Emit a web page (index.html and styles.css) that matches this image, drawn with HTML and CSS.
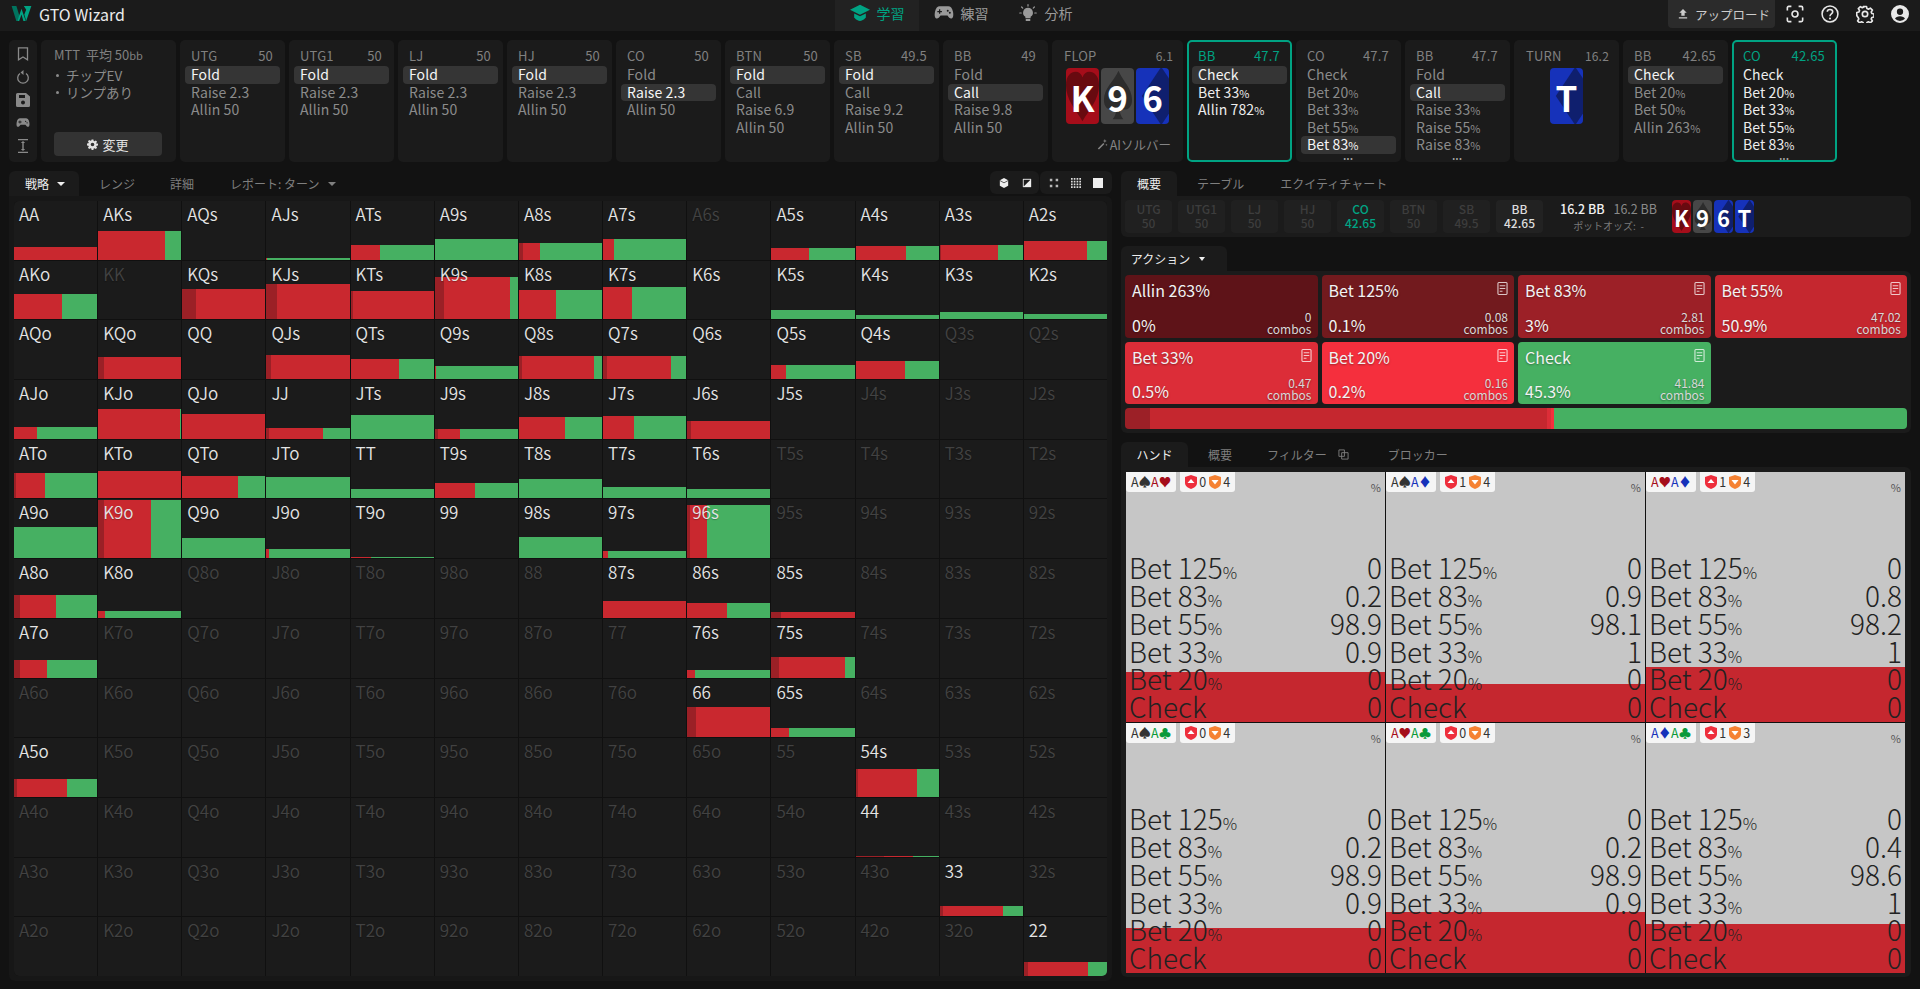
FILE: index.html
```html
<!DOCTYPE html>
<html lang="ja">
<head>
<meta charset="utf-8">
<title>GTO Wizard</title>
<link rel="stylesheet" href="styles.css">
</head>
<body>
<svg class="sprite" aria-hidden="true">
<symbol id="s-heart" viewBox="0 0 34 56"><path d="M17 54C10 42 0 32 0 17 0 7 5 3 10 3c3 0 6 2 7 6 1-4 4-6 7-6 5 0 10 4 10 14 0 15-10 25-17 37z"/></symbol>
<symbol id="s-spade" viewBox="0 0 34 56"><path d="M18 2c4 10 14 18 14 30 0 7-4 10-8 10-2 0-4-1-5-3 0 5 1 9 4 13H12c3-4 4-8 4-13-1 2-3 3-5 3-4 0-8-3-8-10C3 20 14 12 18 2z"/></symbol>
<symbol id="s-diamond" viewBox="0 0 34 56"><path d="M26-2l20 30-20 30L6 28z"/></symbol>
<symbol id="s-gamepad" viewBox="0 0 24 18"><path fill-rule="evenodd" d="M7 1h10c3 0 4.700 2 5.800 6.500.8 4 .4 7.500-1.800 8-1.700.4-3.200-1.200-4.800-3.500H7.800C6.200 14.300 4.700 15.900 3 15.500.8 15 .4 11.500 1.200 7.500 2.300 3 4 1 7 1zM6 4.500v2H4v1.500h2v2h1.500V8h2V6.500h-2v-2zM16.500 5a1.200 1.200 0 100 2.400 1.200 1.200 0 000-2.400zM19 7.500a1.200 1.200 0 100 2.400 1.200 1.200 0 000-2.400z"/></symbol>
<symbol id="s-gear" viewBox="0 0 24 24"><path fill-rule="evenodd" d="M10 1h4l.6 3.200 1.900.8 2.700-1.900 2.800 2.800-1.900 2.700.8 1.900L24 10v4l-3.100.6-.8 1.900 1.900 2.700-2.800 2.800-2.700-1.900-1.900.8L14 24h-4l-.6-3.100-1.900-.8-2.700 1.900-2.800-2.800 1.900-2.700-.8-1.900L0 14v-4l3.100-.6.800-1.900L2 4.800 4.800 2l2.700 1.900 1.900-.8zM12 8a4 4 0 100 8 4 4 0 000-8z"/></symbol>
<symbol id="s-note" viewBox="0 0 11 14"><path fill="none" stroke="currentColor" stroke-width="1.200" d="M1.500.6h8a.9.9 0 01.9.9v11a.9.9 0 01-.9.9h-8a.9.9 0 01-.9-.9v-11a.9.9 0 01.9-.9zM2.500 4h6M2.500 7h6M2.500 10h3"/></symbol>
<symbol id="s-shield-up" viewBox="0 0 12 14"><path d="M6 0l6 2v6c0 3-3 5-6 6-3-1-6-3-6-6V2z"/><path fill="#fff" d="M6 4l3.500 4h-7z"/></symbol>
<symbol id="s-shield-down" viewBox="0 0 12 14"><path d="M6 0l6 2v6c0 3-3 5-6 6-3-1-6-3-6-6V2z"/><path fill="#fff" d="M2.500 5h7L6 9.500z"/></symbol>
</svg>

<header class="topbar">
  <div class="brand">
    <svg class="logo" viewBox="0 0 21 16"><path fill="#00745f" d="M0 0h5l3.500 11L6 16H5z"/><path fill="#00a383" d="M6 16L10.500 3l4.500 13h-2.500L10.500 9 8 16zM13 0h8l-5.500 16L13.500 9l2-5z"/></svg>
    <span>GTO Wizard</span>
  </div>
  <nav class="mainnav">
    <a class="navtab active"><svg viewBox="0 0 24 20"><path fill="currentColor" d="M12 0l12 6-12 6L0 6zM5 10.500v5s3 4 7 4 7-4 7-4v-5l-7 3.500z"/></svg>学習</a>
    <a class="navtab"><svg viewBox="0 0 24 18"><use href="#s-gamepad" fill="currentColor"/></svg>練習</a>
    <a class="navtab"><svg viewBox="0 0 24 24"><path fill="currentColor" d="M12 5a6.500 6.500 0 00-3.500 12v2h7v-2A6.500 6.500 0 0012 5zM9 20h6v2.500H9z"/><path stroke="currentColor" stroke-width="1.600" stroke-linecap="round" d="M12 .8v2M3.500 4l1.500 1.500M20.500 4L19 5.500M1 12h2M21 12h2"/></svg>分析</a>
  </nav>
  <div class="tools">
    <button class="upload"><svg viewBox="0 0 12 12"><path fill="currentColor" d="M6 0l4.500 4.500H8V8H4V4.500H1.500zM1 10h10v1.500H1z"/></svg>アップロード</button>
    <svg class="tool" viewBox="0 0 20 20"><path fill="none" stroke="currentColor" stroke-width="1.800" d="M1.500 6V3a1.500 1.500 0 011.500-1.500h3M14 1.500h3A1.500 1.500 0 0118.500 3v3M18.500 14v3a1.500 1.500 0 01-1.500 1.500h-3M6 18.500H3A1.500 1.500 0 011.500 17v-3"/><circle cx="10" cy="10" r="3.300" fill="none" stroke="currentColor" stroke-width="1.800"/></svg>
    <svg class="tool" viewBox="0 0 20 20"><circle cx="10" cy="10" r="8.800" fill="none" stroke="currentColor" stroke-width="1.700"/><path fill="none" stroke="currentColor" stroke-width="1.800" d="M7 7.500C7 5.800 8.300 5 10 5s3 1 3 2.600c0 2.400-3 2.200-3 4.900"/><circle cx="10" cy="15" r="1.200" fill="currentColor"/></svg>
    <svg class="tool" viewBox="0 0 24 24"><path fill="none" stroke="currentColor" stroke-width="2.200" stroke-linejoin="round" d="M10 2h4l.6 2.800 2 .9 2.500-1.600 2.800 2.800-1.600 2.500.9 2 2.800.6v4l-2.800.6-.9 2 1.600 2.500-2.800 2.800-2.500-1.600-2 .9-.6 2.800h-4l-.6-2.800-2-.9-2.500 1.600-2.800-2.800 1.600-2.500-.9-2L1 14v-4l2.800-.6.900-2-1.600-2.500 2.800-2.800 2.500 1.600 2-.9z"/><circle cx="12" cy="12" r="3.600" fill="none" stroke="currentColor" stroke-width="2.200"/></svg>
    <svg class="tool" viewBox="0 0 20 20"><path fill="currentColor" fill-rule="evenodd" d="M10 0a10 10 0 110 20 10 10 0 010-20zm0 4a3.500 3.500 0 100 7 3.500 3.500 0 000-7zm0 8.500c-2.700 0-5 1.200-5.500 2.800a7.500 7.500 0 0011 0c-.5-1.600-2.800-2.800-5.500-2.800z"/></svg>
  </div>
</header>

<section class="spots">
  <div class="sidebtns">
    <svg viewBox="0 0 12 14"><path fill="none" stroke="currentColor" stroke-width="1.300" d="M1.500.8h9v12L6 10l-4.500 2.800z"/></svg>
    <svg viewBox="0 0 14 14"><path fill="none" stroke="currentColor" stroke-width="1.300" d="M4 3.500a5.300 5.300 0 106 0"/><path fill="currentColor" d="M7.500 0v5L4.500 2.500z"/></svg>
    <svg viewBox="0 0 14 14"><path fill="currentColor" fill-rule="evenodd" d="M1.500 0H10l4 3.500v9a1.500 1.500 0 01-1.500 1.500h-11A1.500 1.500 0 010 12.500v-11A1.500 1.500 0 011.500 0zM3 2v3h6V2zm4 5.500a2 2 0 100 4 2 2 0 000-4z"/></svg>
    <svg viewBox="0 0 24 18"><use href="#s-gamepad" fill="currentColor"/></svg>
    <svg viewBox="0 0 14 14"><path fill="currentColor" d="M2 0h10v1.300H2zM2 12.700h10V14H2zM6.300 4H4.800L7 2l2.200 2H7.700v6h1.500L7 12l-2.200-2h1.500z"/></svg>
  </div>
  <div class="spot info">
    <div class="infohead">MTT&nbsp;&nbsp;平均 50<small>bb</small></div>
    <ul class="bullets"><li>チップEV</li><li>リンプあり</li></ul>
    <button class="change"><svg viewBox="0 0 24 24"><use href="#s-gear" fill="currentColor"/></svg>変更</button>
  </div>
  <div class="spot"><div class="head"><span>UTG</span><span>50</span></div><div class="opt on">Fold</div><div class="opt">Raise 2.3</div><div class="opt">Allin 50</div></div>
  <div class="spot"><div class="head"><span>UTG1</span><span>50</span></div><div class="opt on">Fold</div><div class="opt">Raise 2.3</div><div class="opt">Allin 50</div></div>
  <div class="spot"><div class="head"><span>LJ</span><span>50</span></div><div class="opt on">Fold</div><div class="opt">Raise 2.3</div><div class="opt">Allin 50</div></div>
  <div class="spot"><div class="head"><span>HJ</span><span>50</span></div><div class="opt on">Fold</div><div class="opt">Raise 2.3</div><div class="opt">Allin 50</div></div>
  <div class="spot"><div class="head"><span>CO</span><span>50</span></div><div class="opt">Fold</div><div class="opt on">Raise 2.3</div><div class="opt">Allin 50</div></div>
  <div class="spot"><div class="head"><span>BTN</span><span>50</span></div><div class="opt on">Fold</div><div class="opt">Call</div><div class="opt">Raise 6.9</div><div class="opt">Allin 50</div></div>
  <div class="spot"><div class="head"><span>SB</span><span>49.5</span></div><div class="opt on">Fold</div><div class="opt">Call</div><div class="opt">Raise 9.2</div><div class="opt">Allin 50</div></div>
  <div class="spot"><div class="head"><span>BB</span><span>49</span></div><div class="opt">Fold</div><div class="opt on">Call</div><div class="opt">Raise 9.8</div><div class="opt">Allin 50</div></div>
  <div class="spot street flop">
    <div class="head"><span>FLOP</span><span class="pot">6.1</span></div>
    <div class="board">
      <div class="pcard hearts"><svg><use href="#s-heart"/></svg><span>K</span></div>
      <div class="pcard spades"><svg><use href="#s-spade"/></svg><span>9</span></div>
      <div class="pcard diamonds"><svg><use href="#s-diamond"/></svg><span>6</span></div>
    </div>
    <div class="solver"><svg viewBox="0 0 14 14"><path fill="currentColor" d="M1 12l7-7 1.500 1.500-7 7zM10 0l.7 1.800L12.500 2.500 10.700 3.200 10 5l-.7-1.800L7.500 2.500l1.800-.7zM12 6l.4 1.100 1.100.4-1.100.4L12 9l-.4-1.100-1.100-.4 1.100-.4z"/></svg>AIソルバー</div>
  </div>
  <div class="spot current"><div class="head"><span>BB</span><span>47.7</span></div><div class="opt on">Check</div><div class="opt lit">Bet 33<small>%</small></div><div class="opt lit">Allin 782<small>%</small></div></div>
  <div class="spot"><div class="head"><span>CO</span><span>47.7</span></div><div class="opt">Check</div><div class="opt">Bet 20<small>%</small></div><div class="opt">Bet 33<small>%</small></div><div class="opt">Bet 55<small>%</small></div><div class="opt on">Bet 83<small>%</small></div><div class="more">•••</div></div>
  <div class="spot"><div class="head"><span>BB</span><span>47.7</span></div><div class="opt">Fold</div><div class="opt on">Call</div><div class="opt">Raise 33<small>%</small></div><div class="opt">Raise 55<small>%</small></div><div class="opt">Raise 83<small>%</small></div><div class="more">•••</div></div>
  <div class="spot street">
    <div class="head"><span>TURN</span><span class="pot">16.2</span></div>
    <div class="board"><div class="pcard diamonds"><svg><use href="#s-diamond"/></svg><span>T</span></div></div>
  </div>
  <div class="spot"><div class="head"><span>BB</span><span>42.65</span></div><div class="opt on">Check</div><div class="opt">Bet 20<small>%</small></div><div class="opt">Bet 50<small>%</small></div><div class="opt">Allin 263<small>%</small></div></div>
  <div class="spot current"><div class="head"><span>CO</span><span>42.65</span></div><div class="opt lit">Check</div><div class="opt lit">Bet 20<small>%</small></div><div class="opt lit">Bet 33<small>%</small></div><div class="opt lit">Bet 55<small>%</small></div><div class="opt lit">Bet 83<small>%</small></div><div class="more">•••</div></div>
</section>

<main class="workspace">
  <section class="leftcol">
    <div class="tabbar">
      <a class="tab active w70">戦略<i class="caret"></i></a>
      <a class="tab t-range">レンジ</a>
      <a class="tab t-detail">詳細</a>
      <a class="tab t-report">レポート: ターン<i class="caret dim"></i></a>
      <div class="toggles">
        <div class="tgroup g1">
          <svg viewBox="0 0 12 12"><path fill="#eee" d="M6 0l5 2.800v6.400L6 12l-5-2.800V2.800z"/><path fill="none" stroke="#1b1b1b" stroke-width=".8" d="M1 3l5 2.800L11 3"/></svg>
          <svg viewBox="0 0 12 12"><path fill="#eee" d="M1 1h10v10H1z"/><path fill="#1b1b1b" d="M2 2v8.200L10.200 2z" /></svg>
        </div>
        <div class="tgroup g2">
          <svg viewBox="0 0 12 12"><path fill="#ddd" d="M1 1h3v3H1zM8 1h3v3H8zM1 8h3v3H1zM8 8h3v3H8z" opacity=".8"/></svg>
          <svg viewBox="0 0 12 12"><path fill="#ddd" d="M0 0h2v2H0zM3.300 0h2v2h-2zM6.700 0h2v2h-2zM10 0h2v2h-2zM0 3.300h2v2H0zM3.300 3.300h2v2h-2zM6.700 3.300h2v2h-2zM10 3.300h2v2h-2zM0 6.700h2v2H0zM3.300 6.700h2v2h-2zM6.700 6.700h2v2h-2zM10 6.700h2v2h-2zM0 10h2v2H0zM3.300 10h2v2h-2zM6.700 10h2v2h-2zM10 10h2v2h-2z"/></svg>
          <svg viewBox="0 0 12 12"><path fill="#eee" d="M0 0h12v12H0z"/></svg>
        </div>
      </div>
    </div>
    <div class="panel gridpanel">
      <div class="matrix">
<div class="cell">AA<div class="bar" style="height:13px"><i class="r" style="flex:100"></i></div></div>
<div class="cell">AKs<div class="bar" style="height:29px"><i class="r" style="flex:80"></i><i class="g" style="flex:20"></i></div></div>
<div class="cell">AQs</div>
<div class="cell">AJs<div class="bar" style="height:2px"><i class="r" style="flex:1"></i><i class="g" style="flex:99"></i></div></div>
<div class="cell">ATs<div class="bar" style="height:15px"><i class="r" style="flex:35"></i><i class="g" style="flex:65"></i></div></div>
<div class="cell">A9s<div class="bar" style="height:21px"><i class="g" style="flex:100"></i></div></div>
<div class="cell">A8s<div class="bar" style="height:17px"><i class="d" style="flex:5"></i><i class="r" style="flex:20"></i><i class="g" style="flex:75"></i></div></div>
<div class="cell">A7s<div class="bar" style="height:21px"><i class="r" style="flex:13"></i><i class="g" style="flex:87"></i></div></div>
<div class="cell off">A6s</div>
<div class="cell">A5s<div class="bar" style="height:12px"><i class="r" style="flex:45"></i><i class="g" style="flex:55"></i></div></div>
<div class="cell">A4s<div class="bar" style="height:14px"><i class="r" style="flex:61"></i><i class="g" style="flex:39"></i></div></div>
<div class="cell">A3s<div class="bar" style="height:15px"><i class="d" style="flex:2"></i><i class="r" style="flex:68"></i><i class="g" style="flex:30"></i></div></div>
<div class="cell">A2s<div class="bar" style="height:19px"><i class="r" style="flex:76"></i><i class="g" style="flex:24"></i></div></div>

<div class="cell">AKo<div class="bar" style="height:25px"><i class="r" style="flex:58"></i><i class="g" style="flex:42"></i></div></div>
<div class="cell off">KK</div>
<div class="cell">KQs<div class="bar" style="height:30px"><i class="d" style="flex:16"></i><i class="r" style="flex:84"></i></div></div>
<div class="cell">KJs<div class="bar" style="height:35px"><i class="d" style="flex:13"></i><i class="r" style="flex:87"></i></div></div>
<div class="cell">KTs<div class="bar" style="height:28px"><i class="d" style="flex:2.500"></i><i class="r" style="flex:97.500"></i></div></div>
<div class="cell">K9s<div class="bar" style="height:42px"><i class="d" style="flex:11"></i><i class="r" style="flex:80"></i><i class="g" style="flex:9"></i></div></div>
<div class="cell">K8s<div class="bar" style="height:29px"><i class="r" style="flex:45"></i><i class="g" style="flex:55"></i></div></div>
<div class="cell">K7s<div class="bar" style="height:32px"><i class="r" style="flex:35"></i><i class="g" style="flex:65"></i></div></div>
<div class="cell">K6s</div>
<div class="cell">K5s<div class="bar" style="height:9px"><i class="g" style="flex:100"></i></div></div>
<div class="cell">K4s<div class="bar" style="height:4px"><i class="g" style="flex:100"></i></div></div>
<div class="cell">K3s<div class="bar" style="height:7px"><i class="g" style="flex:100"></i></div></div>
<div class="cell">K2s<div class="bar" style="height:5px"><i class="g" style="flex:100"></i></div></div>

<div class="cell">AQo</div>
<div class="cell">KQo<div class="bar" style="height:22px"><i class="d" style="flex:7"></i><i class="r" style="flex:93"></i></div></div>
<div class="cell">QQ</div>
<div class="cell">QJs<div class="bar" style="height:24px"><i class="d" style="flex:5"></i><i class="r" style="flex:95"></i></div></div>
<div class="cell">QTs<div class="bar" style="height:20px"><i class="r" style="flex:58"></i><i class="g" style="flex:42"></i></div></div>
<div class="cell">Q9s<div class="bar" style="height:13px"><i class="r" style="flex:1"></i><i class="g" style="flex:99"></i></div></div>
<div class="cell">Q8s<div class="bar" style="height:23px"><i class="d" style="flex:4"></i><i class="r" style="flex:86"></i><i class="g" style="flex:10"></i></div></div>
<div class="cell">Q7s<div class="bar" style="height:23px"><i class="d" style="flex:5"></i><i class="r" style="flex:77"></i><i class="g" style="flex:18"></i></div></div>
<div class="cell">Q6s</div>
<div class="cell">Q5s<div class="bar" style="height:14px"><i class="r" style="flex:18"></i><i class="g" style="flex:82"></i></div></div>
<div class="cell">Q4s<div class="bar" style="height:18px"><i class="r" style="flex:60"></i><i class="g" style="flex:40"></i></div></div>
<div class="cell off">Q3s</div>
<div class="cell off">Q2s</div>

<div class="cell">AJo<div class="bar" style="height:12px"><i class="r" style="flex:28"></i><i class="g" style="flex:72"></i></div></div>
<div class="cell">KJo<div class="bar" style="height:30px"><i class="r" style="flex:98"></i><i class="g" style="flex:2"></i></div></div>
<div class="cell">QJo<div class="bar" style="height:25px"><i class="r" style="flex:100"></i></div></div>
<div class="cell">JJ<div class="bar" style="height:11px"><i class="d" style="flex:3"></i><i class="r" style="flex:65"></i><i class="g" style="flex:32"></i></div></div>
<div class="cell">JTs<div class="bar" style="height:24px"><i class="g" style="flex:100"></i></div></div>
<div class="cell">J9s<div class="bar" style="height:10px"><i class="d" style="flex:4"></i><i class="r" style="flex:26"></i><i class="g" style="flex:70"></i></div></div>
<div class="cell">J8s<div class="bar" style="height:22px"><i class="r" style="flex:55"></i><i class="g" style="flex:45"></i></div></div>
<div class="cell">J7s<div class="bar" style="height:23px"><i class="r" style="flex:37"></i><i class="g" style="flex:63"></i></div></div>
<div class="cell">J6s<div class="bar" style="height:18px"><i class="d" style="flex:5"></i><i class="r" style="flex:95"></i></div></div>
<div class="cell">J5s</div>
<div class="cell off">J4s</div>
<div class="cell off">J3s</div>
<div class="cell off">J2s</div>

<div class="cell">ATo<div class="bar" style="height:25px"><i class="d" style="flex:2"></i><i class="r" style="flex:35"></i><i class="g" style="flex:63"></i></div></div>
<div class="cell">KTo<div class="bar" style="height:27px"><i class="r" style="flex:100"></i></div></div>
<div class="cell">QTo<div class="bar" style="height:22px"><i class="r" style="flex:67"></i><i class="g" style="flex:33"></i></div></div>
<div class="cell">JTo<div class="bar" style="height:21px"><i class="g" style="flex:100"></i></div></div>
<div class="cell">TT<div class="bar" style="height:9px"><i class="r" style="flex:1"></i><i class="g" style="flex:99"></i></div></div>
<div class="cell">T9s<div class="bar" style="height:15px"><i class="r" style="flex:48"></i><i class="g" style="flex:52"></i></div></div>
<div class="cell">T8s<div class="bar" style="height:19px"><i class="g" style="flex:100"></i></div></div>
<div class="cell">T7s<div class="bar" style="height:11px"><i class="g" style="flex:100"></i></div></div>
<div class="cell">T6s<div class="bar" style="height:9px"><i class="g" style="flex:100"></i></div></div>
<div class="cell off">T5s</div>
<div class="cell off">T4s</div>
<div class="cell off">T3s</div>
<div class="cell off">T2s</div>

<div class="cell">A9o<div class="bar" style="height:31px"><i class="g" style="flex:100"></i></div></div>
<div class="cell">K9o<div class="bar" style="height:58px"><i class="d" style="flex:7"></i><i class="r" style="flex:57"></i><i class="g" style="flex:36"></i></div></div>
<div class="cell">Q9o<div class="bar" style="height:20px"><i class="g" style="flex:100"></i></div></div>
<div class="cell">J9o<div class="bar" style="height:9px"><i class="r" style="flex:3"></i><i class="g" style="flex:97"></i></div></div>
<div class="cell">T9o<div class="bar" style="height:1px"><i class="r" style="flex:25"></i><i class="g" style="flex:75"></i></div></div>
<div class="cell">99</div>
<div class="cell">98s<div class="bar" style="height:21px"><i class="g" style="flex:100"></i></div></div>
<div class="cell">97s<div class="bar" style="height:7px"><i class="r" style="flex:6"></i><i class="g" style="flex:94"></i></div></div>
<div class="cell">96s<div class="bar" style="height:53px"><i class="d" style="flex:3"></i><i class="r" style="flex:21"></i><i class="g" style="flex:76"></i></div></div>
<div class="cell off">95s</div>
<div class="cell off">94s</div>
<div class="cell off">93s</div>
<div class="cell off">92s</div>

<div class="cell">A8o<div class="bar" style="height:23px"><i class="d" style="flex:7"></i><i class="r" style="flex:44"></i><i class="g" style="flex:49"></i></div></div>
<div class="cell">K8o<div class="bar" style="height:7px"><i class="r" style="flex:8"></i><i class="g" style="flex:92"></i></div></div>
<div class="cell off">Q8o</div>
<div class="cell off">J8o</div>
<div class="cell off">T8o</div>
<div class="cell off">98o</div>
<div class="cell off">88</div>
<div class="cell">87s<div class="bar" style="height:17px"><i class="r" style="flex:100"></i></div></div>
<div class="cell">86s<div class="bar" style="height:15px"><i class="r" style="flex:48"></i><i class="g" style="flex:52"></i></div></div>
<div class="cell">85s<div class="bar" style="height:6px"><i class="d" style="flex:12"></i><i class="r" style="flex:88"></i></div></div>
<div class="cell off">84s</div>
<div class="cell off">83s</div>
<div class="cell off">82s</div>

<div class="cell">A7o<div class="bar" style="height:18px"><i class="d" style="flex:7"></i><i class="r" style="flex:33"></i><i class="g" style="flex:60"></i></div></div>
<div class="cell off">K7o</div>
<div class="cell off">Q7o</div>
<div class="cell off">J7o</div>
<div class="cell off">T7o</div>
<div class="cell off">97o</div>
<div class="cell off">87o</div>
<div class="cell off">77</div>
<div class="cell">76s<div class="bar" style="height:8px"><i class="r" style="flex:9"></i><i class="g" style="flex:91"></i></div></div>
<div class="cell">75s<div class="bar" style="height:21px"><i class="d" style="flex:9"></i><i class="r" style="flex:79"></i><i class="g" style="flex:12"></i></div></div>
<div class="cell off">74s</div>
<div class="cell off">73s</div>
<div class="cell off">72s</div>

<div class="cell off">A6o</div>
<div class="cell off">K6o</div>
<div class="cell off">Q6o</div>
<div class="cell off">J6o</div>
<div class="cell off">T6o</div>
<div class="cell off">96o</div>
<div class="cell off">86o</div>
<div class="cell off">76o</div>
<div class="cell">66<div class="bar" style="height:30px"><i class="d" style="flex:11"></i><i class="r" style="flex:89"></i></div></div>
<div class="cell">65s<div class="bar" style="height:9px"><i class="r" style="flex:21"></i><i class="g" style="flex:79"></i></div></div>
<div class="cell off">64s</div>
<div class="cell off">63s</div>
<div class="cell off">62s</div>

<div class="cell">A5o<div class="bar" style="height:18px"><i class="d" style="flex:3"></i><i class="r" style="flex:61"></i><i class="g" style="flex:36"></i></div></div>
<div class="cell off">K5o</div>
<div class="cell off">Q5o</div>
<div class="cell off">J5o</div>
<div class="cell off">T5o</div>
<div class="cell off">95o</div>
<div class="cell off">85o</div>
<div class="cell off">75o</div>
<div class="cell off">65o</div>
<div class="cell off">55</div>
<div class="cell">54s<div class="bar" style="height:28px"><i class="d" style="flex:3"></i><i class="r" style="flex:71"></i><i class="g" style="flex:26"></i></div></div>
<div class="cell off">53s</div>
<div class="cell off">52s</div>

<div class="cell off">A4o</div>
<div class="cell off">K4o</div>
<div class="cell off">Q4o</div>
<div class="cell off">J4o</div>
<div class="cell off">T4o</div>
<div class="cell off">94o</div>
<div class="cell off">84o</div>
<div class="cell off">74o</div>
<div class="cell off">64o</div>
<div class="cell off">54o</div>
<div class="cell">44<div class="bar" style="height:1px"><i class="d" style="flex:34"></i><i class="r" style="flex:35"></i><i class="g" style="flex:31"></i></div></div>
<div class="cell off">43s</div>
<div class="cell off">42s</div>

<div class="cell off">A3o</div>
<div class="cell off">K3o</div>
<div class="cell off">Q3o</div>
<div class="cell off">J3o</div>
<div class="cell off">T3o</div>
<div class="cell off">93o</div>
<div class="cell off">83o</div>
<div class="cell off">73o</div>
<div class="cell off">63o</div>
<div class="cell off">53o</div>
<div class="cell off">43o</div>
<div class="cell">33<div class="bar" style="height:10px"><i class="d" style="flex:4"></i><i class="r" style="flex:72"></i><i class="g" style="flex:24"></i></div></div>
<div class="cell off">32s</div>

<div class="cell off">A2o</div>
<div class="cell off">K2o</div>
<div class="cell off">Q2o</div>
<div class="cell off">J2o</div>
<div class="cell off">T2o</div>
<div class="cell off">92o</div>
<div class="cell off">82o</div>
<div class="cell off">72o</div>
<div class="cell off">62o</div>
<div class="cell off">52o</div>
<div class="cell off">42o</div>
<div class="cell off">32o</div>
<div class="cell">22<div class="bar" style="height:14px"><i class="d" style="flex:5"></i><i class="r" style="flex:72"></i><i class="g" style="flex:23"></i></div></div>
      </div>
    </div>
  </section>

  <section class="rightcol">
    <div class="tabbar">
      <a class="tab active w56">概要</a>
      <a class="tab t-table">テーブル</a>
      <a class="tab t-equity">エクイティチャート</a>
    </div>
    <div class="panel summary">
      <div class="seat"><b>UTG</b><b>50</b></div>
      <div class="seat"><b>UTG1</b><b>50</b></div>
      <div class="seat"><b>LJ</b><b>50</b></div>
      <div class="seat"><b>HJ</b><b>50</b></div>
      <div class="seat act"><b>CO</b><b>42.65</b></div>
      <div class="seat"><b>BTN</b><b>50</b></div>
      <div class="seat"><b>SB</b><b>49.5</b></div>
      <div class="seat live"><b>BB</b><b>42.65</b></div>
      <div class="potinfo">
        <div class="potline"><strong>16.2 BB</strong><span>16.2 BB</span></div>
        <div class="odds">ポットオッズ:&nbsp; -</div>
      </div>
      <div class="miniboard">
        <div class="pcard mini hearts"><svg><use href="#s-heart"/></svg><span>K</span></div>
        <div class="pcard mini spades"><svg><use href="#s-spade"/></svg><span>9</span></div>
        <div class="pcard mini diamonds"><svg><use href="#s-diamond"/></svg><span>6</span></div>
        <div class="pcard mini diamonds"><svg><use href="#s-diamond"/></svg><span>T</span></div>
      </div>
    </div>

    <div class="tabbar spaced">
      <a class="tab active w106">アクション<i class="caret small"></i></a>
    </div>
    <div class="panel actions">
      <div class="actgrid">
        <div class="act-card c-allin"><div class="act-name">Allin 263%</div><div class="act-foot"><span class="act-pct">0%</span><span class="combos">0<br>combos</span></div></div>
        <div class="act-card c-125"><svg class="noteic"><use href="#s-note"/></svg><div class="act-name">Bet 125%</div><div class="act-foot"><span class="act-pct">0.1%</span><span class="combos">0.08<br>combos</span></div></div>
        <div class="act-card c-83"><svg class="noteic"><use href="#s-note"/></svg><div class="act-name">Bet 83%</div><div class="act-foot"><span class="act-pct">3%</span><span class="combos">2.81<br>combos</span></div></div>
        <div class="act-card c-55"><svg class="noteic"><use href="#s-note"/></svg><div class="act-name">Bet 55%</div><div class="act-foot"><span class="act-pct">50.9%</span><span class="combos">47.02<br>combos</span></div></div>
        <div class="act-card c-33"><svg class="noteic"><use href="#s-note"/></svg><div class="act-name">Bet 33%</div><div class="act-foot"><span class="act-pct">0.5%</span><span class="combos">0.47<br>combos</span></div></div>
        <div class="act-card c-20"><svg class="noteic"><use href="#s-note"/></svg><div class="act-name">Bet 20%</div><div class="act-foot"><span class="act-pct">0.2%</span><span class="combos">0.16<br>combos</span></div></div>
        <div class="act-card c-check"><svg class="noteic"><use href="#s-note"/></svg><div class="act-name">Check</div><div class="act-foot"><span class="act-pct">45.3%</span><span class="combos">41.84<br>combos</span></div></div>
      </div>
      <div class="stratbar"><i class="c-83" style="flex:3.2"></i><i class="c-55" style="flex:50.9"></i><i class="c-33" style="flex:.5"></i><i class="c-20" style="flex:.4"></i><i class="c-check" style="flex:45.3"></i></div>
    </div>

    <div class="tabbar spaced">
      <a class="tab active w67">ハンド</a>
      <a class="tab t-h2">概要</a>
      <a class="tab t-h3">フィルター<svg class="copyic" viewBox="0 0 12 12"><path fill="none" stroke="currentColor" d="M1 1h6v7H1zM4 4h7v7H4z"/></svg></a>
      <a class="tab t-h4">ブロッカー</a>
    </div>
    <div class="panel handpanel">
      <div class="hands">
        <div class="hand">
          <div class="fill" style="height:50px"></div>
          <div class="tags"><span class="tag"><span class="sp">A♠</span><span class="he">A♥</span></span><span class="tag"><svg class="bl"><use href="#s-shield-up"/></svg>0<svg class="ub"><use href="#s-shield-down"/></svg>4</span><em>%</em></div>
          <div class="lines"><div><span>Bet 125<small>%</small></span><span>0</span></div><div><span>Bet 83<small>%</small></span><span>0.2</span></div><div><span>Bet 55<small>%</small></span><span>98.9</span></div><div><span>Bet 33<small>%</small></span><span>0.9</span></div><div><span>Bet 20<small>%</small></span><span>0</span></div><div><span>Check</span><span>0</span></div></div>
        </div>
        <div class="hand">
          <div class="fill" style="height:38px"></div>
          <div class="tags"><span class="tag"><span class="sp">A♠</span><span class="di">A♦</span></span><span class="tag"><svg class="bl"><use href="#s-shield-up"/></svg>1<svg class="ub"><use href="#s-shield-down"/></svg>4</span><em>%</em></div>
          <div class="lines"><div><span>Bet 125<small>%</small></span><span>0</span></div><div><span>Bet 83<small>%</small></span><span>0.9</span></div><div><span>Bet 55<small>%</small></span><span>98.1</span></div><div><span>Bet 33<small>%</small></span><span>1</span></div><div><span>Bet 20<small>%</small></span><span>0</span></div><div><span>Check</span><span>0</span></div></div>
        </div>
        <div class="hand">
          <div class="fill" style="height:55px"></div>
          <div class="tags"><span class="tag"><span class="he">A♥</span><span class="di">A♦</span></span><span class="tag"><svg class="bl"><use href="#s-shield-up"/></svg>1<svg class="ub"><use href="#s-shield-down"/></svg>4</span><em>%</em></div>
          <div class="lines"><div><span>Bet 125<small>%</small></span><span>0</span></div><div><span>Bet 83<small>%</small></span><span>0.8</span></div><div><span>Bet 55<small>%</small></span><span>98.2</span></div><div><span>Bet 33<small>%</small></span><span>1</span></div><div><span>Bet 20<small>%</small></span><span>0</span></div><div><span>Check</span><span>0</span></div></div>
        </div>
        <div class="hand">
          <div class="fill" style="height:45px"></div>
          <div class="tags"><span class="tag"><span class="sp">A♠</span><span class="cl">A♣</span></span><span class="tag"><svg class="bl"><use href="#s-shield-up"/></svg>0<svg class="ub"><use href="#s-shield-down"/></svg>4</span><em>%</em></div>
          <div class="lines"><div><span>Bet 125<small>%</small></span><span>0</span></div><div><span>Bet 83<small>%</small></span><span>0.2</span></div><div><span>Bet 55<small>%</small></span><span>98.9</span></div><div><span>Bet 33<small>%</small></span><span>0.9</span></div><div><span>Bet 20<small>%</small></span><span>0</span></div><div><span>Check</span><span>0</span></div></div>
        </div>
        <div class="hand">
          <div class="fill" style="height:61px"></div>
          <div class="tags"><span class="tag"><span class="he">A♥</span><span class="cl">A♣</span></span><span class="tag"><svg class="bl"><use href="#s-shield-up"/></svg>0<svg class="ub"><use href="#s-shield-down"/></svg>4</span><em>%</em></div>
          <div class="lines"><div><span>Bet 125<small>%</small></span><span>0</span></div><div><span>Bet 83<small>%</small></span><span>0.2</span></div><div><span>Bet 55<small>%</small></span><span>98.9</span></div><div><span>Bet 33<small>%</small></span><span>0.9</span></div><div><span>Bet 20<small>%</small></span><span>0</span></div><div><span>Check</span><span>0</span></div></div>
        </div>
        <div class="hand">
          <div class="fill" style="height:49px"></div>
          <div class="tags"><span class="tag"><span class="di">A♦</span><span class="cl">A♣</span></span><span class="tag"><svg class="bl"><use href="#s-shield-up"/></svg>1<svg class="ub"><use href="#s-shield-down"/></svg>3</span><em>%</em></div>
          <div class="lines"><div><span>Bet 125<small>%</small></span><span>0</span></div><div><span>Bet 83<small>%</small></span><span>0.4</span></div><div><span>Bet 55<small>%</small></span><span>98.6</span></div><div><span>Bet 33<small>%</small></span><span>1</span></div><div><span>Bet 20<small>%</small></span><span>0</span></div><div><span>Check</span><span>0</span></div></div>
        </div>
      </div>
    </div>
  </section>
</main>
</body>
</html>
```

FILE: styles.css
```css
* { box-sizing: border-box; }
html, body { margin: 0; height: 989px; overflow: hidden; }
body {
  background: #121212;
  color: #e6e6e6;
  font-family: "Noto Sans CJK JP", "Noto Sans", sans-serif;
  font-size: 14px;
}
.sprite { display: none; }

/* top bar */
.topbar { height: 31px; background: #1b1b1b; display: flex; }
.brand { flex: 1; display: flex; align-items: center; padding-left: 11px; height: 27px; font-size: 16px; color: #ececec; }
.logo { width: 21px; height: 15px; margin-right: 7px; }
.mainnav { display: flex; }
.navtab { width: 84px; display: flex; align-items: center; padding-left: 15px; font-size: 14px; color: #9a9a9a; padding-bottom: 5px; }
.navtab svg { width: 20px; height: 18px; margin-right: 7px; flex: none; }
.navtab.active { background: #222; color: #00a383; }
.tools { flex: 1; display: flex; justify-content: flex-end; align-items: flex-start; padding-right: 10px; color: #e8e8e8; }
.upload { width: 107px; height: 28px; margin-right: 2.500px; border: 0; background: #2b2b2b; color: #ccc; border-radius: 0 0 4px 4px; font: 12.500px "Noto Sans CJK JP", sans-serif; display: flex; align-items: center; padding: 0 0 0 10px; white-space: nowrap; }
.upload svg { width: 10px; height: 10px; margin-right: 7px; flex: none; }
.tool { width: 18px; height: 18px; margin: 5px 8.500px; }
.tool:last-child { margin-right: 1px; }

/* spot strip */
.spots { margin-top: 9px; padding-left: 9px; display: flex; gap: 4px; height: 122px; }
.sidebtns { width: 28px; background: #1b1b1b; border-radius: 5px; display: flex; flex-direction: column; align-items: center; padding-top: 7px; gap: 9px; color: #8a8a8a; }
.sidebtns svg { width: 14px; height: 14px; }
.spot { width: 105px; background: #1b1b1b; border-radius: 5px; padding: 4px 5px 0; font-size: 14px; color: #8b8b8b; position: relative; }
.head { height: 22px; display: flex; justify-content: space-between; align-items: center; padding: 0 7px 0 6px; font-size: 13px; color: #808080; letter-spacing: .2px; }
.opt { height: 17.500px; line-height: 17.500px; padding-left: 6px; border-radius: 4px; white-space: nowrap; letter-spacing: .1px; }
.opt small { font-size: 11px; }
.opt.on { background: #353535; color: #f5f5f5; }
.opt.lit { color: #ededed; }
.more { font-size: 7px; line-height: 6px; text-align: center; color: #aaa; margin-top: 1px; letter-spacing: 1px; }
.spot.current { border: 2px solid #00a383; padding: 2px 3px 0; }
.spot.current .head { color: #00a383; }
.info { width: 135px; padding: 4px 13px 0; }
.infohead { height: 22px; line-height: 22px; font-size: 13px; color: #808080; white-space: nowrap; }
.infohead small { font-size: 11px; }
.bullets { list-style: none; margin: 1px 0 0; padding: 0; font-size: 13.500px; line-height: 17px; color: #8b8b8b; }
.bullets li { padding-left: 12px; position: relative; white-space: nowrap; }
.bullets li::before { content: ""; position: absolute; left: 2px; top: 7px; width: 3px; height: 3px; border-radius: 50%; background: #8b8b8b; }
.change { position: absolute; left: 13px; bottom: 6px; width: 108px; height: 24px; background: #333; border: 0; border-radius: 4px; color: #e2e2e2; font: 13px "Noto Sans CJK JP", sans-serif; display: flex; align-items: center; justify-content: center; }
.change svg { width: 11px; height: 11px; margin-right: 4px; }
.street { padding: 4px 7px 0; }
.flop { width: 131px; }
.street .head { padding: 0 3px 0 5px; }
.pot { font-size: 12px; }
.board { display: flex; gap: 2px; justify-content: center; margin-top: 2px; }
.pcard { width: 33px; height: 56px; border-radius: 4px; position: relative; overflow: hidden; display: flex; align-items: center; justify-content: center; color: #fff; font-size: 35px; font-weight: 700; line-height: 1; }
.pcard svg { position: absolute; inset: 0; width: 100%; height: 100%; }
.pcard span { position: relative; }
.hearts { background: #a50d1a; fill: #680a10; }
.spades { background: #474747; fill: #2c2c2c; }
.diamonds { background: #1632ba; fill: #0f1f6e; }
.solver { display: flex; justify-content: flex-end; align-items: center; margin-top: 11px; padding-right: 5px; font-size: 12.500px; color: #858585; white-space: nowrap; }
.solver svg { width: 11px; height: 11px; margin-right: 2px; }

/* workspace */
.workspace { display: flex; gap: 9px; padding: 0 9px; margin-top: 9px; }
.leftcol { width: 1103px; }
.rightcol { width: 790px; }
.tabbar { height: 25px; display: flex; position: relative; }
.tabbar.spaced { margin-top: 9px; }
.tab { display: flex; align-items: center; justify-content: center; font-size: 12px; color: #7f7f7f; white-space: nowrap; }
.tab.active { background: #1b1b1b; color: #eee; border-radius: 6px 6px 0 0; }
.w70 { width: 70px; justify-content: flex-start; padding-left: 16px; }
.w56 { width: 56px; }
.w106 { width: 106px; padding-right: 12px; }
.w67 { width: 67px; }
.caret { width: 0; height: 0; border: 4px solid transparent; border-top: 4px solid #eee; border-bottom: 0; margin-left: 8px; }
.caret.small { border-width: 3px; border-top-width: 4px; border-bottom: 0; margin-left: 9px; }
.caret.dim { border-top-color: #7f7f7f; margin-left: 9px; }
.t-range { margin-left: 20px; }
.t-detail { margin-left: 35px; }
.t-report { margin-left: 36px; }
.t-table { margin-left: 20px; }
.t-equity { margin-left: 36px; }
.t-h2 { margin-left: 20px; }
.t-h3 { margin-left: 35px; }
.t-h4 { margin-left: 39px; }
.copyic { width: 11px; height: 11px; margin-left: 11px; }
.toggles { margin-left: auto; display: flex; gap: 1px; height: 23px; }
.tgroup { background: #1b1b1b; border-radius: 6px; display: flex; align-items: center; }
.g1 { width: 49px; padding-left: 9px; gap: 13px; }
.g2 { width: 72px; padding-left: 9px; gap: 12px; }
.tgroup svg { width: 10px; height: 10px; }
.panel { background: #1b1b1b; border-radius: 0 6px 6px 6px; }

/* matrix */
.gridpanel { background: #171717; padding: 5px; height: 785px; }
.matrix { height: 775px; display: grid; grid-template-columns: repeat(13, 1fr); grid-template-rows: repeat(13, 1fr); gap: 1px; background: #101010; border-radius: 5px; overflow: hidden; }
.cell { position: relative; isolation: isolate; background: #1b1b1b; padding-left: 5px; font-size: 17px; font-weight: 350; line-height: 25px; color: #e4e4e4; overflow: hidden; text-shadow: 0 1px 1px rgba(0,0,0,.25); }
.cell.off { color: #424242; }
.bar { position: absolute; left: 0; right: 0; bottom: 0; display: flex; z-index: -1; }
.bar i { display: block; height: 100%; }
.r { background: #c9282f; }
.d { background: #9b2026; }
.g { background: #46b062; }

/* summary */
.summary { height: 41px; padding: 4px; display: flex; gap: 6px; }
.seat { width: 47px; background: #202020; border-radius: 4px; display: flex; flex-direction: column; align-items: center; justify-content: center; font-size: 12px; line-height: 14px; color: #3d3d3d; padding-bottom: 1px; }
.seat b { font-weight: 500; }
.seat.act { color: #00a383; }
.seat.live { color: #dcdcdc; background: #222; }
.potinfo { width: 97px; margin-left: 11px; text-align: center; }
.potline { display: flex; justify-content: space-between; font-size: 12.500px; line-height: 18px; color: #8a8a8a; white-space: nowrap; }
.potline strong { color: #f0f0f0; font-weight: 500; }
.odds { font-size: 10px; line-height: 15px; color: #7a7a7a; }
.miniboard { display: flex; gap: 2px; margin-left: 9px; }
.pcard.mini { width: 19px; height: 33px; font-size: 22px; }

/* actions */
.actions { padding: 4px; height: 162px; }
.actgrid { display: grid; grid-template-columns: repeat(4, 1fr); grid-template-rows: 63px 62px; gap: 4px; }
.act-card { position: relative; border-radius: 4px; padding: 3px 7px 2px; display: flex; flex-direction: column; justify-content: space-between; color: #f2f2f2; text-shadow: 0 1px 2px rgba(0,0,0,.35); }
.act-name { font-size: 16px; line-height: 24px; }
.act-foot { display: flex; justify-content: space-between; align-items: flex-end; }
.act-pct { font-size: 16px; line-height: 22px; }
.combos { font-size: 12px; line-height: 11.500px; text-align: right; color: #d8d8d8; margin-right: -1px; padding-bottom: 2px; }
.noteic { position: absolute; right: 6px; top: 7px; width: 11px; height: 13px; color: rgba(255,255,255,.75); }
.c-allin { background: #5e1318; }
.c-125 { background: #721a1e; }
.c-83 { background: #9c2027; }
.c-55 { background: #c5272f; }
.c-33 { background: #dc2d38; }
.c-20 { background: #f52f3d; }
.c-check { background: #46b062; }
.stratbar { margin-top: 4px; height: 21px; display: flex; border-radius: 4px; overflow: hidden; }
.stratbar i { display: block; }

/* hands */
.handpanel { padding: 5px 6px 4px 5px; height: 510px; }
.hands { display: grid; grid-template-columns: repeat(3, 1fr); grid-template-rows: repeat(2, 250px); gap: 1px; background: #101010; }
.hand { position: relative; background: #c6c6c6; color: #222; display: flex; flex-direction: column; justify-content: space-between; overflow: hidden; }
.fill { position: absolute; left: 0; right: 0; bottom: 0; background: #c5272f; }
.tags { position: relative; display: flex; gap: 4px; align-items: flex-start; }
.tag { height: 20px; background: #f5f5f5; border-radius: 0 0 3px 3px; padding: 0 5px; font-size: 12.500px; line-height: 20px; display: flex; align-items: center; color: #333; font-family: "Noto Sans CJK JP", "DejaVu Sans", sans-serif; }
.tags em { margin: 8px 4px 0 auto; font-style: normal; font-size: 11px; line-height: 14px; color: #555; }
.sp { color: #333; }
.he { color: #a50d1a; }
.di { color: #1632ba; }
.cl { color: #0a9a3a; }
.tag svg { width: 12px; height: 14px; margin: 0 2px; }
.tag svg.bl { fill: #ee2e3c; margin-left: 0; }
.tag svg.ub { fill: #f58233; margin-left: 3px; }
.lines { position: relative; font-size: 28px; font-weight: 300; line-height: 27.800px; margin-bottom: 1px; }
.lines div { height: 27.800px; display: flex; justify-content: space-between; padding: 0 3px; white-space: nowrap; }
.lines small { font-size: 16px; }
```
